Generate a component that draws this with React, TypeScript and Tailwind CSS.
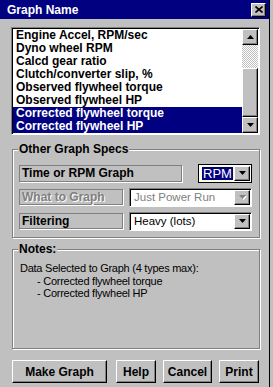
import React from "react";

const raised =
  "border border-t-white border-l-white border-r-black border-b-black shadow-[inset_-1px_-1px_0_#808080]";
const sunken =
  "border border-t-[#808080] border-l-[#808080] border-r-white border-b-white shadow-[inset_1px_1px_0_#000]";
const etched = "border border-[#808080] shadow-[1px_1px_0_#fff,inset_1px_1px_0_#fff]";

const listItems = [
  "Engine Accel, RPM/sec",
  "Dyno wheel RPM",
  "Calcd gear ratio",
  "Clutch/converter slip, %",
  "Observed flywheel torque",
  "Observed flywheel HP",
  "Corrected flywheel torque",
  "Corrected flywheel HP",
];
const selected = [6, 7];

const Arrow = ({ up = false, disabled = false }: { up?: boolean; disabled?: boolean }) => (
  <svg width="7" height="4" viewBox="0 0 7 4" className={disabled ? "drop-shadow-[1px_1px_0_#fff]" : ""}>
    <path d={up ? "M3.5 0L7 4H0z" : "M0 0h7L3.5 4z"} fill={disabled ? "#808080" : "#000"} />
  </svg>
);

const DropButton = ({ disabled = false }: { disabled?: boolean }) => (
  <div className={`w-[16px] h-full flex items-center justify-center bg-[#c0c0c0] ${raised}`}>
    <Arrow disabled={disabled} />
  </div>
);

const Combo = ({
  text,
  width,
  disabled = false,
}: {
  text: string;
  width: string;
  disabled?: boolean;
}) => (
  <div className={`${width} h-[19px] bg-white flex items-stretch p-[1px] ${sunken}`}>
    <span
      className={`flex-1 pl-[3px] text-[11.5px] leading-[15px] ${
        disabled ? "text-[#808080]" : "text-black"
      }`}
    >
      {text}
    </span>
    <DropButton disabled={disabled} />
  </div>
);

const Legend = ({ children }: { children: React.ReactNode }) => (
  <span className="absolute -top-[8px] left-[5px] px-[1px] bg-[#c0c0c0] text-[12px] font-bold leading-[14px]">
    {children}
  </span>
);

export default function App() {
  return (
    <div className="w-[273px] h-[387px] bg-[#c0c0c0] font-['Liberation_Sans',Arial,sans-serif] text-black overflow-hidden">
      <div className="w-[270px] h-full border-r border-black flex flex-col">
        {/* Title bar */}
        <div className="h-[19px] bg-[#000080] flex items-center justify-between pl-[7px] pr-[3px]">
          <span className="text-white text-[12px] font-bold leading-none">Graph Name</span>
          <div className={`w-[15px] h-[14px] bg-[#c0c0c0] flex items-center justify-center ${raised}`}>
            <svg width="8" height="7" viewBox="0 0 8 7">
              <path d="M0.5 0.5L7.5 6.5M7.5 0.5L0.5 6.5" stroke="#000" strokeWidth="1.6" />
            </svg>
          </div>
        </div>

        <div className="pl-[11px] flex flex-col">
          {/* List box */}
          <div className={`mt-[8px] w-[249px] h-[108px] bg-white flex p-[1px] ${sunken}`}>
            <div className="flex-1 overflow-hidden">
              {listItems.map((item, i) => (
                <div
                  key={item}
                  className={`h-[13px] pl-[3px] text-[12px] font-bold leading-[13px] whitespace-nowrap ${
                    selected.includes(i) ? "bg-[#000080] text-white" : ""
                  }`}
                >
                  {item}
                </div>
              ))}
            </div>
            {/* Scrollbar */}
            <div className="w-[16px] flex flex-col">
              <div className={`h-[16px] bg-[#c0c0c0] flex items-center justify-center ${raised}`}>
                <Arrow up />
              </div>
              <div className="h-[23px] bg-[repeating-conic-gradient(#c0c0c0_0%_25%,#ffffff_0%_50%)] bg-[length:2px_2px]" />
              <div className={`flex-1 bg-[#c0c0c0] ${raised}`} />
              <div className={`h-[16px] bg-[#c0c0c0] flex items-center justify-center ${raised}`}>
                <Arrow />
              </div>
            </div>
          </div>

          {/* Other Graph Specs */}
          <div className={`relative mt-[14px] ml-[1px] w-[248px] pt-[13px] pb-[6px] pl-[6px] pr-[7px] flex flex-col gap-[4px] ${etched}`}>
            <Legend>Other Graph Specs</Legend>
            <div className="h-[20px] flex items-center justify-between">
              <div className="w-[163px] h-[17px] border border-[#808080] shadow-[1px_1px_0_#fff] pl-[2px] text-[12px] font-bold leading-[15px]">
                Time or RPM Graph
              </div>
              <div className="w-[54px] h-[19px] border border-black bg-white flex items-stretch p-[1px]">
                <div className="flex-1 flex items-center pl-[2px] pr-[1px]">
                  <span className="bg-[#000080] text-white text-[13px] leading-[13px] px-[1px] outline-1 outline-dotted outline-[#ffff80] w-full">
                    RPM
                  </span>
                </div>
                <DropButton />
              </div>
            </div>
            <div className="h-[20px] flex items-center justify-between">
              <div className="w-[104px] h-[16px] border border-[#808080] shadow-[1px_1px_0_#fff] pl-[2px] text-[12px] font-bold leading-[14px] text-[#808080] [text-shadow:1px_1px_0_#fff]">
                What to Graph
              </div>
              <Combo text="Just Power Run" width="w-[123px]" disabled />
            </div>
            <div className="h-[20px] flex items-center justify-between">
              <div className="w-[104px] h-[16px] border border-[#808080] shadow-[1px_1px_0_#fff] pl-[2px] text-[12px] font-bold leading-[14px]">
                Filtering
              </div>
              <Combo text="Heavy (lots)" width="w-[123px]" />
            </div>
          </div>

          {/* Notes */}
          <div className={`relative mt-[11px] ml-[1px] w-[248px] h-[100px] pt-[12px] pl-[7px] ${etched}`}>
            <Legend>Notes:</Legend>
            <div className="text-[11px] leading-[12.5px] tracking-[-0.25px]">
              <div>Data Selected to Graph (4 types max):</div>
              <div className="pl-[17px]">- Corrected flywheel torque</div>
              <div className="pl-[17px]">- Corrected flywheel HP</div>
            </div>
          </div>

          {/* Buttons */}
          <div className="mt-[11px] ml-[1px] flex">
            {[
              { label: "Make Graph", w: "w-[95px]", ml: "" },
              { label: "Help", w: "w-[40px]", ml: "ml-[9px]" },
              { label: "Cancel", w: "w-[49px]", ml: "ml-[7px]" },
              { label: "Print", w: "w-[40px]", ml: "ml-[7px]" },
            ].map((b) => (
              <button
                key={b.label}
                className={`${b.w} ${b.ml} h-[23px] bg-[#c0c0c0] text-[12px] font-bold leading-none flex items-center justify-center ${raised}`}
              >
                {b.label}
              </button>
            ))}
          </div>
        </div>
      </div>
    </div>
  );
}
